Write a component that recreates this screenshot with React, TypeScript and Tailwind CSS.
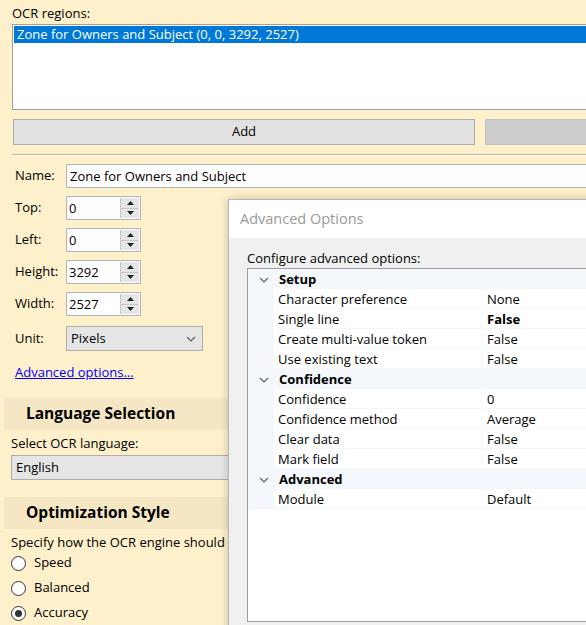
import React from 'react';

const FONT = { fontFamily: '"Open Sans", "Noto Sans", Arial, sans-serif' };

// spinner field (numeric up/down)
function Spin({ label, value }: { label: string; value: string }) {
  return (
    <div className="flex items-center h-[24px]">
      <span className="w-[51px] text-[13px] text-black">{label}</span>
      <div className="flex h-[24px] w-[75px] border border-[#b4b4b4] bg-white">
        <span className="flex-1 pl-[2px] text-[13px] leading-[22px] text-black">{value}</span>
        <div className="flex flex-col w-[19px] m-[1px] ml-0 bg-[#e6e6e6] border-l border-[#c8c8c8]">
          <div className="flex-1 flex items-center justify-center border-b border-[#c8c8c8]">
            <svg width="7" height="4" viewBox="0 0 7 4"><path d="M0 4 L3.5 0 L7 4 Z" fill="#222" /></svg>
          </div>
          <div className="flex-1 flex items-center justify-center">
            <svg width="7" height="4" viewBox="0 0 7 4"><path d="M0 0 L3.5 4 L7 0 Z" fill="#222" /></svg>
          </div>
        </div>
      </div>
    </div>
  );
}

function Chevron() {
  return (
    <svg width="10" height="6" viewBox="0 0 10 6" fill="none">
      <path d="M1 1 L5 5 L9 1" stroke="#606060" strokeWidth="1.2" />
    </svg>
  );
}

function Radio({ label, checked }: { label: string; checked?: boolean }) {
  return (
    <div className="flex items-center gap-[8px] h-[24px] pl-[11px]">
      <span className="w-[15px] h-[15px] rounded-full border border-[#333] bg-white flex items-center justify-center">
        {checked && <span className="w-[7px] h-[7px] rounded-full bg-[#333]" />}
      </span>
      <span className="text-[13px] text-black">{label}</span>
    </div>
  );
}

function SectionHeader({ title }: { title: string }) {
  return (
    <div className="ml-[4px] h-[32px] bg-[#f5e7c3] flex items-center pl-[22px] text-[15.5px] font-bold text-black">
      {title}
    </div>
  );
}

type Row = { cat?: string; name?: string; value?: string; bold?: boolean };

const ROWS: Row[] = [
  { cat: 'Setup' },
  { name: 'Character preference', value: 'None' },
  { name: 'Single line', value: 'False', bold: true },
  { name: 'Create multi-value token', value: 'False' },
  { name: 'Use existing text', value: 'False' },
  { cat: 'Confidence' },
  { name: 'Confidence', value: '0' },
  { name: 'Confidence method', value: 'Average' },
  { name: 'Clear data', value: 'False' },
  { name: 'Mark field', value: 'False' },
  { cat: 'Advanced' },
  { name: 'Module', value: 'Default' },
];

function GridRow({ row }: { row: Row }) {
  if (row.cat) {
    return (
      <div className="flex items-center h-[20px] pt-[2px] bg-[#f4f7fc]">
        <span className="w-[31px] flex justify-center"><Chevron /></span>
        <span className="text-[13px] font-bold text-black">{row.cat}</span>
      </div>
    );
  }
  return (
    <div className="flex h-[20px] bg-[#f4f7fc] pb-[1px]">
      <div className="w-[26px]" />
      <div className="w-[207px] bg-white pl-[4px] pt-[2px] text-[13px] leading-[17px] text-black">{row.name}</div>
      <div className={`flex-1 ml-[1px] bg-white pl-[5px] pt-[2px] text-[13px] leading-[17px] text-black ${row.bold ? 'font-bold' : ''}`}>
        {row.value}
      </div>
    </div>
  );
}

export default function App() {
  return (
    <div className="relative w-[586px] h-[625px] overflow-hidden bg-[#fdf0cb]" style={FONT}>
      {/* main panel */}
      <div className="w-[960px] pt-[4px]">
        <div className="pl-[12px] text-[13px] text-black leading-[18px]">OCR regions:</div>
        <div className="ml-[12px] mt-[2px] h-[86px] border border-[#a0a0a0] bg-white p-[1px]">
          <div className="h-[17px] bg-[#0078d7] text-white text-[13px] leading-[17px] pl-[3px]">
            Zone for Owners and Subject (0, 0, 3292, 2527)
          </div>
        </div>
        <div className="flex gap-[10px] ml-[13px] mt-[9px]">
          <div className="w-[462px] h-[26px] bg-[#e1e1e1] border border-[#adadad] flex items-center justify-center text-[13px] text-black">
            Add
          </div>
          <div className="w-[462px] h-[26px] bg-[#cccccc] border border-[#bfbfbf]" />
        </div>
        <div className="ml-[12px] mt-[9px] border-t border-[#b9b3a4] border-b border-b-[#fffaf0] h-[2px]" />

        <div className="flex items-center mt-[8px] h-[24px] pl-[15px]">
          <span className="w-[51px] text-[13px] text-black">Name:</span>
          <div className="flex-1 h-[24px] border border-[#b4b4b4] bg-white pl-[3px] text-[13px] leading-[22px] text-black">
            Zone for Owners and Subject
          </div>
        </div>

        <div className="flex flex-col gap-[8px] mt-[8px] pl-[15px]">
          <Spin label="Top:" value="0" />
          <Spin label="Left:" value="0" />
          <Spin label="Height:" value="3292" />
          <Spin label="Width:" value="2527" />
        </div>

        <div className="flex items-center mt-[10px] h-[25px] pl-[15px]">
          <span className="w-[51px] text-[13px] text-black">Unit:</span>
          <div className="w-[137px] h-[25px] border border-[#adadad] bg-[#e5e5e5] flex items-center justify-between pl-[4px] pr-[6px]">
            <span className="text-[13px] text-black">Pixels</span>
            <Chevron />
          </div>
        </div>

        <div className="pl-[15px] mt-[13px] text-[13px] leading-[16px] text-[#0000ff] underline">Advanced options...</div>

        <div className="mt-[18px]">
          <SectionHeader title="Language Selection" />
        </div>
        <div className="pl-[11px] mt-[4px] text-[13px] leading-[18px] text-black">Select OCR language:</div>
        <div className="ml-[11px] mt-[3px] h-[25px] border border-[#adadad] bg-[#e5e5e5] pl-[4px] text-[13px] leading-[23px] text-black">
          English
        </div>

        <div className="mt-[17px]">
          <SectionHeader title="Optimization Style" />
        </div>
        <div className="pl-[11px] mt-[4px] text-[13px] leading-[18px] text-black">
          Specify how the OCR engine should balance speed and accuracy.
        </div>
        <div className="flex flex-col gap-[1px]">
          <Radio label="Speed" />
          <Radio label="Balanced" />
          <Radio label="Accuracy" checked />
        </div>
      </div>

      {/* Advanced Options dialog window */}
      <div className="absolute left-[228px] top-[199px] w-[420px] h-[460px] border border-[#b8b8b8] bg-[#f0f0f0] shadow-[0_0_8px_rgba(0,0,0,0.22)]">
        <div className="h-[38px] bg-white flex items-center pl-[11px] text-[14.5px] text-[#9a9a9a]">Advanced Options</div>
        <div className="pl-[18px] pt-[11px]">
          <div className="text-[13px] leading-[18px] text-black">Configure advanced options:</div>
          <div className="mt-[1px] h-[354px] border border-[#a0a0a0] bg-white">
            {ROWS.map((r, i) => (
              <GridRow key={i} row={r} />
            ))}
          </div>
        </div>
      </div>
    </div>
  );
}
